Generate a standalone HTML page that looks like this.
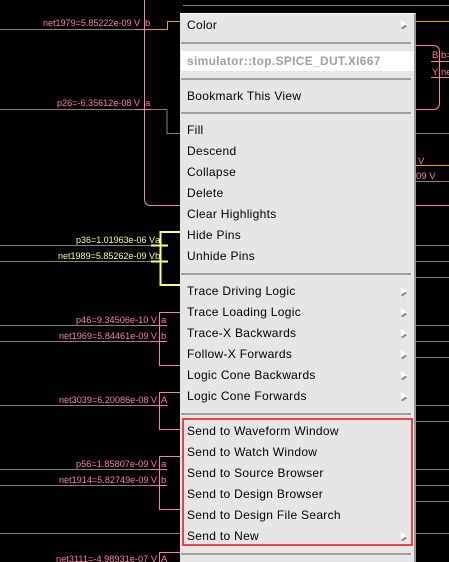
<!DOCTYPE html>
<html><head><meta charset="utf-8"><style>
html,body{margin:0;width:449px;height:562px;background:#000;overflow:hidden;position:relative;font-family:"Liberation Sans",sans-serif}
svg{position:absolute;left:0;top:0}
.m{position:absolute;left:180px;top:13px;width:234px;height:549px;background:#e6e6e6;border-right:2px solid #9a9a9a;border-top:1px solid #fff;overflow:hidden}
.i{position:absolute;left:7px;font-size:12px;color:#000;letter-spacing:0.3px;line-height:14px}
.s{position:absolute;left:1px;width:230px;height:2px;background:#a0a0a0}
.a{position:absolute;right:6px;width:0;height:0;border-top:5px solid transparent;border-bottom:5px solid transparent;border-left:7px solid #fff;}
.a:after{content:"";position:absolute;left:-7px;top:1px;width:6px;height:2px;background:#888;transform:rotate(-35deg)}
</style></head><body>
<svg width="449" height="562" font-family="Liberation Sans,sans-serif" font-size="9.5">
<g stroke="#808080" stroke-width="1" fill="none">
<line x1="0" y1="29.5" x2="150" y2="29.5"/>
<line x1="0" y1="109.5" x2="167" y2="109.5"/><polyline points="167,109.5 167,133.5 180,133.5"/>
<line x1="0" y1="245.5" x2="152" y2="245.5"/><line x1="0" y1="261.5" x2="152" y2="261.5"/>
<line x1="0" y1="325.5" x2="152" y2="325.5"/><line x1="0" y1="341.5" x2="152" y2="341.5"/>
<line x1="0" y1="405.5" x2="152" y2="405.5"/>
<line x1="0" y1="469.5" x2="152" y2="469.5"/><line x1="0" y1="485.5" x2="152" y2="485.5"/>
<line x1="0" y1="533.5" x2="180" y2="533.5"/>
<line x1="416" y1="133.5" x2="449" y2="133.5"/><line x1="416" y1="181.5" x2="449" y2="181.5"/>
<line x1="416" y1="245.5" x2="449" y2="245.5"/><line x1="416" y1="261.5" x2="449" y2="261.5"/><line x1="416" y1="277.5" x2="449" y2="277.5"/>
<line x1="416" y1="325.5" x2="449" y2="325.5"/><line x1="416" y1="341.5" x2="449" y2="341.5"/><line x1="416" y1="357.5" x2="449" y2="357.5"/>
<line x1="416" y1="405.5" x2="449" y2="405.5"/><line x1="416" y1="421.5" x2="449" y2="421.5"/>
<line x1="416" y1="469.5" x2="449" y2="469.5"/><line x1="416" y1="485.5" x2="449" y2="485.5"/><line x1="416" y1="501.5" x2="449" y2="501.5"/>
<line x1="416" y1="533.5" x2="449" y2="533.5"/>
<line x1="183" y1="5.5" x2="449" y2="5.5"/>
</g>
<polyline points="150,29.5 167.5,29.5 167.5,21.5 181,21.5" stroke="#f0a020" fill="none"/>
<line x1="416" y1="21.5" x2="449" y2="21.5" stroke="#f0a020"/>
<line x1="416" y1="165.5" x2="449" y2="165.5" stroke="#f0a020"/>
<g stroke="#ff7fa0" fill="none">
<path d="M144.5 0 V199 Q144.5 205.5 151 205.5 H180"/>
<line x1="135" y1="29.5" x2="151" y2="29.5"/><line x1="135" y1="109.5" x2="151" y2="109.5"/>
<path d="M416 45.5 H433 Q439.5 45.5 439.5 52 V103 Q439.5 109.5 433 109.5 H416"/>
<line x1="431" y1="61.5" x2="449" y2="61.5"/><line x1="431" y1="77.5" x2="449" y2="77.5"/>
<line x1="439.5" y1="52" x2="439.5" y2="80"/>
<line x1="416" y1="205.5" x2="449" y2="205.5"/>
<rect x="159.5" y="312.5" width="30" height="53"/><line x1="151" y1="325.5" x2="167" y2="325.5"/><line x1="151" y1="341.5" x2="167" y2="341.5"/>
<rect x="159.5" y="392.5" width="30" height="37"/><line x1="151" y1="405.5" x2="167" y2="405.5"/>
<rect x="159.5" y="456.5" width="30" height="53"/><line x1="151" y1="469.5" x2="167" y2="469.5"/><line x1="151" y1="485.5" x2="167" y2="485.5"/>
<rect x="159.5" y="552.5" width="30" height="20"/>
</g>
<g stroke="#ffff80" stroke-width="2" fill="none">
<polyline points="182,232 160.5,232 160.5,285 182,285"/>
<line x1="151" y1="245.5" x2="168" y2="245.5"/><line x1="151" y1="261.5" x2="168" y2="261.5"/>
</g>
<g fill="#ff7fa0">
<text x="43" y="26" textLength="97" lengthAdjust="spacingAndGlyphs">net1979=5.85222e-09 V</text><text x="145" y="26">b</text>
<text x="57" y="106" textLength="83" lengthAdjust="spacingAndGlyphs">p26=-6.35612e-08 V</text><text x="145" y="106">a</text>
<text x="76" y="323" textLength="81" lengthAdjust="spacingAndGlyphs">p46=9.34506e-10 V</text><text x="161" y="323">a</text>
<text x="59" y="339" textLength="98" lengthAdjust="spacingAndGlyphs">net1969=5.84461e-09 V</text><text x="161" y="339">b</text>
<text x="59" y="403" textLength="98" lengthAdjust="spacingAndGlyphs">net3039=6.20086e-08 V</text><text x="161" y="403">A</text>
<text x="76" y="467" textLength="81" lengthAdjust="spacingAndGlyphs">p56=1.85807e-09 V</text><text x="161" y="467">a</text>
<text x="59" y="483" textLength="98" lengthAdjust="spacingAndGlyphs">net1914=5.82749e-09 V</text><text x="161" y="483">b</text>
<text x="56" y="562" textLength="101" lengthAdjust="spacingAndGlyphs">net3111=-4.98931e-07 V</text><text x="161" y="562">A</text>
<text x="432" y="58">B</text><text x="441" y="58">b=</text>
<text x="432" y="75">Y</text><text x="441" y="75">ne</text>
<text x="418" y="164">V</text><text x="416" y="179">09 V</text>
</g>
<g fill="#ffff80">
<text x="76" y="243" textLength="79" lengthAdjust="spacingAndGlyphs">p36=1.01963e-06 V</text><text x="155" y="243">a</text>
<text x="58" y="259" textLength="97" lengthAdjust="spacingAndGlyphs">net1989=5.85262e-09 V</text><text x="155" y="259">b</text>
</g>
</svg>
<div class="m">
<div class="i" style="top:4px">Color</div><div class="a" style="top:6px"></div>
<div class="s" style="top:28px"></div>
<div style="position:absolute;left:1px;top:37px;width:233px;height:20px;background:#fff"></div>
<div class="i" style="top:40px;color:#a0a0a0;font-weight:bold">simulator::top.SPICE_DUT.XI667</div>
<div class="s" style="top:64px"></div>
<div class="i" style="top:75px">Bookmark This View</div>
<div class="s" style="top:98px"></div>
<div class="i" style="top:109px">Fill</div>
<div class="i" style="top:130px">Descend</div>
<div class="i" style="top:151px">Collapse</div>
<div class="i" style="top:172px">Delete</div>
<div class="i" style="top:193px">Clear Highlights</div>
<div class="i" style="top:214px">Hide Pins</div>
<div class="i" style="top:235px">Unhide Pins</div>
<div class="s" style="top:259px"></div>
<div class="i" style="top:270px">Trace Driving Logic</div><div class="a" style="top:273px"></div>
<div class="i" style="top:291px">Trace Loading Logic</div><div class="a" style="top:294px"></div>
<div class="i" style="top:312px">Trace-X Backwards</div><div class="a" style="top:315px"></div>
<div class="i" style="top:333px">Follow-X Forwards</div><div class="a" style="top:336px"></div>
<div class="i" style="top:354px">Logic Cone Backwards</div><div class="a" style="top:357px"></div>
<div class="i" style="top:375px">Logic Cone Forwards</div><div class="a" style="top:378px"></div>
<div class="s" style="top:399px"></div>
<div style="position:absolute;left:2px;top:404px;width:227px;height:124px;border:2px solid #f04040"></div>
<div class="i" style="top:410px">Send to Waveform Window</div>
<div class="i" style="top:431px">Send to Watch Window</div>
<div class="i" style="top:452px">Send to Source Browser</div>
<div class="i" style="top:473px">Send to Design Browser</div>
<div class="i" style="top:494px">Send to Design File Search</div>
<div class="i" style="top:515px">Send to New</div><div class="a" style="top:518px"></div>
<div class="s" style="top:539px"></div>
</div>
</body></html>
